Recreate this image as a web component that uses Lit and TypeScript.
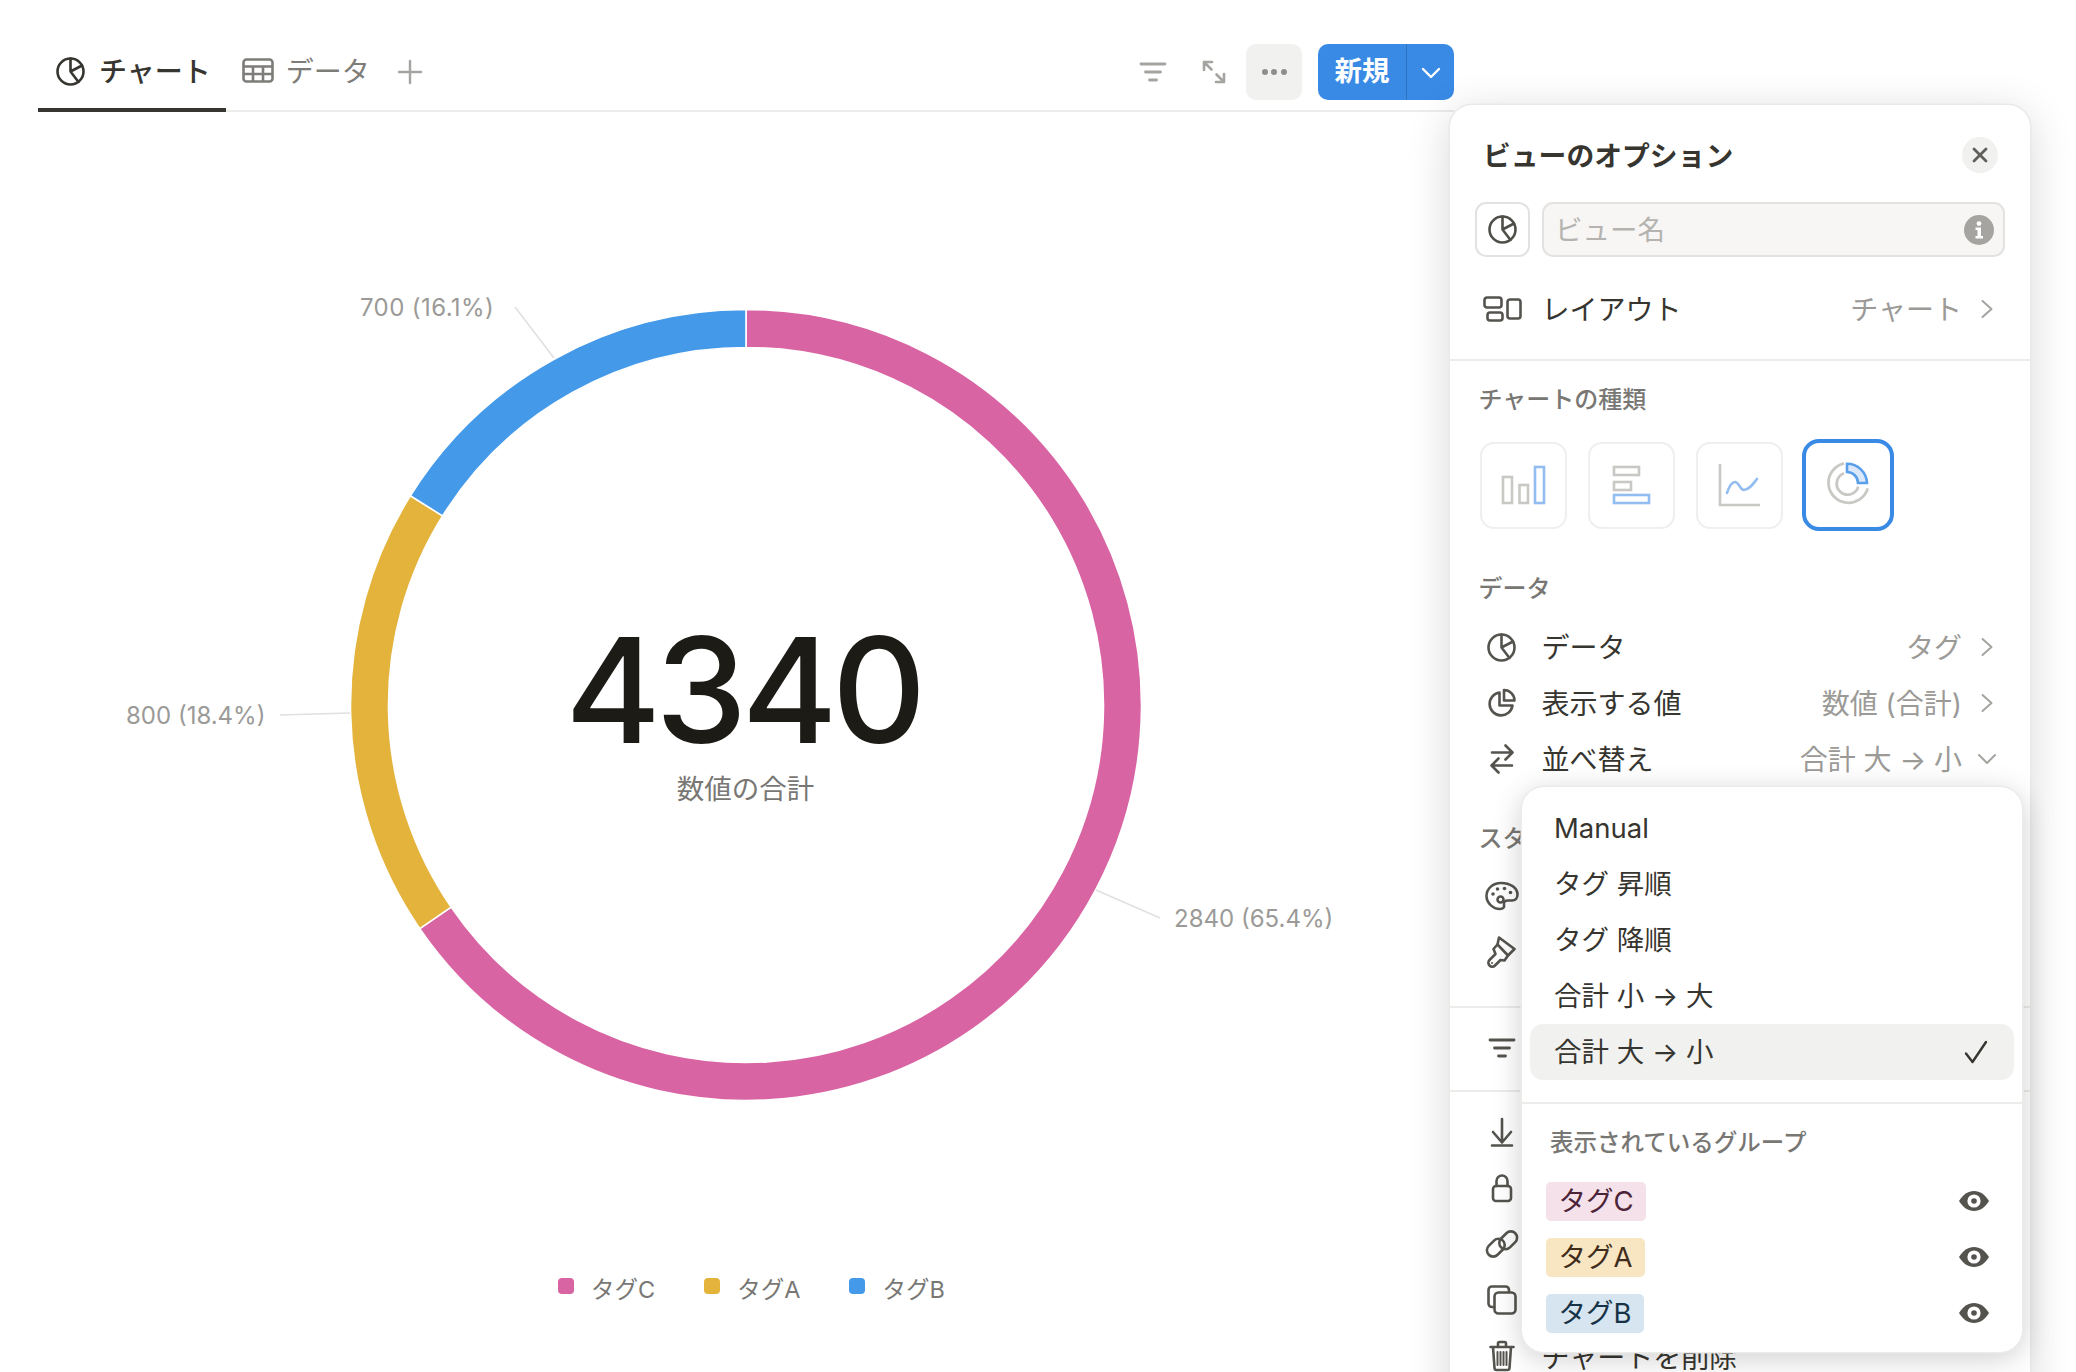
import { LitElement, html, css, svg } from "lit";
import { customElement } from "lit/decorators.js";

const ic = (w: number, h: number, body: unknown, cls = "") =>
  html`<svg class="ic ${cls}" width=${w} height=${h} viewBox="0 0 ${w} ${h}" fill="none" stroke="currentColor" stroke-width="2.6" stroke-linecap="round" stroke-linejoin="round">${body}</svg>`;

const pie = (s = 29) => ic(s, s, svg`<g transform="scale(${s / 29})"><circle cx="14.5" cy="14.5" r="13"/><path d="M14.5 1.5V14.5L26 8.5M14.5 14.5L22.5 25"/></g>`);
const table = () => html`<svg class="ic" width="32" height="25" viewBox="0 0 32 25" fill="none" stroke="currentColor" stroke-width="2.6"><rect x="1.5" y="1.5" width="29" height="22" rx="3"/><path d="M1.5 8.5H30.5M1.5 16H30.5M11 8.5V23.5M21 8.5V23.5"/></svg>`;
const plus = () => ic(26, 26, svg`<path stroke-width="2.4" d="M13 2V24M2 13H24"/>`);
const filter = () => ic(28, 22, svg`<path stroke-width="2.8" d="M2 3H26M6.5 11H21.5M10.5 19H17.5"/>`);
const expand = () => ic(26, 26, svg`<path d="M3 3L10.5 10.5M3 11V3H11M15.5 15.5L23 23M23 15V23H15"/>`);
const chevR = () => ic(14, 20, svg`<path stroke-width="2" d="M2.5 2L11.5 10L2.5 18"/>`, "chev");
const chevD = () => ic(20, 12, svg`<path stroke-width="2" d="M2 2L10 10L18 2"/>`, "chev");
const layoutIc = () => ic(40, 28, svg`<rect x="2.5" y="2.5" width="17" height="10" rx="2.5"/><rect x="5.5" y="17.5" width="15" height="8" rx="2.5"/><rect x="25.5" y="4.5" width="13" height="19" rx="2.5"/>`);
const pie2 = () => ic(30, 30, svg`<path d="M12.5 4.5A11.5 11.5 0 1 0 25.5 17.5H12.5Z"/><path d="M17 2A10.5 10.5 0 0 1 27.5 12.5H17Z"/>`);
const swap = () => ic(24, 32, svg`<path d="M2 9.5H22M15.5 2.5L22.5 9.5L15.5 16.5M22 22.5H2M8.5 15.5L1.5 22.5L8.5 29.5"/>`);
const palette = () => ic(34, 30, svg`<path d="M16 2C7.5 2 1.5 8 1.5 15S8 28 15 28C18.5 28 19.5 26 19 23.5C18.5 21 20 19.5 23 19.5H27C30.5 19.5 32.5 17 32.5 13.5C32.5 6.5 25 2 16 2Z"/><circle cx="8" cy="13" r="1.8" fill="currentColor" stroke="none"/><circle cx="12.5" cy="8" r="1.8" fill="currentColor" stroke="none"/><circle cx="19.5" cy="7.5" r="1.8" fill="currentColor" stroke="none"/><circle cx="25.5" cy="11.5" r="1.8" fill="currentColor" stroke="none"/><circle cx="15.5" cy="18.5" r="3"/>`);
const brush = () => ic(30, 33, svg`<path d="M12 1.5L27.5 13L21 19.5L10.5 8.5Z"/><path d="M10.5 8.5L6.5 13L8.5 18L2.5 24C1 25.5 1 28 2.5 29.5S6.5 31 8 29.5L13.5 24L17.5 24.5L21 19.5"/><circle cx="5" cy="27" r="1" fill="currentColor" stroke="none"/>`);
const download = () => ic(24, 30, svg`<path d="M12 2V25.5M3 15L12 25.5L21 15M2 28.5H22"/>`);
const lock = () => ic(22, 30, svg`<rect x="2" y="13" width="18" height="15" rx="3"/><path d="M5.5 13V8A5.5 5.5 0 0 1 16.5 8V13"/>`);
const link = () => ic(30, 30, svg`<g transform="rotate(-45 15 15)"><rect x="-2" y="7" width="20" height="12.5" rx="6.25"/><rect x="12" y="10.5" width="20" height="12.5" rx="6.25"/></g>`, "over");
const copy = () => ic(30, 30, svg`<rect x="7.5" y="7.5" width="21" height="21" rx="4"/><path d="M7 22H5C3 22 1.5 20.5 1.5 18.5V5C1.5 3 3 1.5 5 1.5H18.5C20.5 1.5 22 3 22 5V7"/>`);
const trash = () => ic(26, 32, svg`<path d="M1.5 7H24.5M9 7V3.5C9 2.5 9.5 2 10.5 2H15.5C16.5 2 17 2.5 17 3.5V7M4 7L5.5 28C5.6 29.5 6.5 30 7.5 30H18.5C19.5 30 20.4 29.5 20.5 28L22 7"/><path stroke-width="2" d="M8.5 12V25M11.5 12V25M14.5 12V25M17.5 12V25"/>`);
const check = () => ic(24, 24, svg`<path stroke-width="2.4" d="M2 13.5L8.5 22L22 2"/>`);
const eye = () => html`<svg class="eye" width="30" height="20" viewBox="0 0 30 20"><path d="M0 10C4 3.5 9 0 15 0S26 3.5 30 10C26 16.5 21 20 15 20S4 16.5 0 10Z" fill="#55534e"/><circle cx="15" cy="10" r="6.6" fill="#fff"/><circle cx="15" cy="10" r="2.8" fill="#55534e"/></svg>`;
const close = () => ic(16, 16, svg`<path stroke-width="2.8" d="M2 2L14 14M14 2L2 14"/>`);
const info = () => html`<svg class="info" width="30" height="30" viewBox="0 0 30 30"><circle cx="15" cy="15" r="15" fill="#a5a4a0"/><circle cx="15" cy="8.6" r="2.4" fill="#fff"/><path d="M11.5 12.5H17V21H19V23.5H11.5V21H13.5V15H11.5Z" fill="#fff"/></svg>`;

const GRAY = "#c9c8c5";
const BLUE = "#93bdf0";
const barChart = () => html`<svg width="46" height="40" viewBox="0 0 46 40" fill="none" stroke-width="2.6"><rect x="2" y="12" width="9" height="26" stroke=${GRAY}/><rect x="18.5" y="20" width="8.5" height="18" stroke=${GRAY}/><rect x="34" y="2" width="9" height="36" stroke=${BLUE}/></svg>`;
const hbarChart = () => html`<svg width="40" height="40" viewBox="0 0 40 40" fill="none" stroke-width="2.6"><rect x="2" y="2" width="25" height="8" stroke=${GRAY}/><rect x="2" y="17" width="17" height="8" stroke=${GRAY}/><rect x="2" y="30" width="35" height="8" stroke=${BLUE}/></svg>`;
const lineChart = () => html`<svg width="44" height="44" viewBox="0 0 44 44" fill="none" stroke-width="2.6"><path d="M2 1V42H42" stroke=${GRAY}/><path d="M9 30C11 24 14 19 17 19C21 19 22 27 26 27C31 27 35 21 39 16" stroke=${BLUE} stroke-linecap="round"/></svg>`;
const donutChart = () => html`<svg width="48" height="48" viewBox="0 0 48 48" fill="none" stroke-width="2.8"><path d="M20 2.3A20 20 0 1 0 43.7 27.3" stroke=${GRAY}/><path d="M20 12.3A11 11 0 1 0 34.3 25.7" stroke=${GRAY}/><path d="M23 2.8A20 20 0 0 1 43 22H34A11 11 0 0 0 23 11Z" fill="#dbe8f9" stroke="#5a9fea" stroke-width="2.6"/></svg>`;

const CX = 746, CY = 705, R = 395.5, RI = 357.5;
const DATA = [
  { name: "タグC", v: 2840, color: "#d964a3" },
  { name: "タグA", v: 800, color: "#e3b33c" },
  { name: "タグB", v: 700, color: "#4499e9" },
];
const pt = (r: number, a: number) => `${(CX + r * Math.sin(a)).toFixed(2)} ${(CY - r * Math.cos(a)).toFixed(2)}`;
function sector(a0: number, a1: number) {
  const large = a1 - a0 > Math.PI ? 1 : 0;
  return `M${pt(R, a0)}A${R} ${R} 0 ${large} 1 ${pt(R, a1)}L${pt(RI, a1)}A${RI} ${RI} 0 ${large} 0 ${pt(RI, a0)}Z`;
}
const total = DATA.reduce((s, d) => s + d.v, 0);

@customElement("app-root")
export class AppRoot extends LitElement {
  static styles = css`
    :host {
      display: block; position: relative; width: 2076px; height: 1372px; overflow: hidden;
      background: #fff; color: #37352f;
      font-family: Inter, "Noto Sans CJK JP", sans-serif;
    }
    * { box-sizing: border-box; }
    svg { display: block; flex: none; }
    svg.over { overflow: visible; }
    .header {
      margin-left: 38px; width: 1416px; height: 112px; padding-top: 44px;
      display: flex; align-items: flex-start; border-bottom: 2px solid #ececeb;
    }
    .tab {
      height: 68px; display: flex; align-items: flex-start; gap: 12px; font-size: 28px; line-height: 57px;
      color: #7d7c78; padding: 0 14px 0 16px;
    }
    .tab svg { margin-top: 14px; }
    .tab.active {
      color: #37352f; padding: 0 15px 0 18px; gap: 14px; font-weight: 500;
      border-bottom: 4px solid #37352f;
    }
    .tab.active svg { margin-top: 13px; }
    .addtab { color: #a5a4a0; margin: 15px 0 0 13px; }
    .spacer { flex: 1; }
    .tool { color: #a5a4a0; height: 56px; display: flex; align-items: center; }
    .tool.f { margin-right: 34px; }
    .tool.e { margin-right: 19px; }
    .more {
      width: 56px; height: 56px; border-radius: 10px; background: #f1f1ef;
      display: flex; align-items: center; justify-content: center; gap: 3.5px; margin-right: 16px;
    }
    .more i { width: 6px; height: 6px; border-radius: 50%; background: #8f8e8a; }
    .newbtn {
      width: 136px; height: 56px; background: #388ae5; color: #fff; border-radius: 10px;
      display: flex; align-items: stretch; font-size: 27.5px; font-weight: 700; line-height: 54px;
    }
    .newbtn .lab { width: 89px; text-align: center; border-right: 1px solid #2f72bf; }
    .newbtn .drop { flex: 1; display: flex; align-items: center; justify-content: center; padding-top: 2px; }
    .chart { display: block; }
    .chart .lbl { font-size: 24px; fill: #9b9a97; font-family: Inter, sans-serif; }
    .chart .lbl.wide { letter-spacing: 0.4px; }
    .chart .num { font-size: 146px; font-weight: 500; letter-spacing: -5.5px; fill: #1d1b16; font-family: Inter, sans-serif; text-anchor: middle; }
    .chart .sub { font-size: 27.5px; fill: #787774; font-family: "Noto Sans CJK JP", sans-serif; text-anchor: middle; }
    .legend { margin-left: 558px; display: flex; gap: 49px; font-size: 23.5px; line-height: 32px; color: #787774; }
    .legend .it { display: flex; gap: 17px; }
    .legend .sq { width: 16px; height: 16px; border-radius: 4px; margin-top: 4px; }

    .panel {
      position: absolute; left: 1450px; top: 105px; width: 580px; height: 1320px; background: #fff;
      border-radius: 22px; font-size: 28px; padding-top: 22px;
      box-shadow: 0 0 0 1.5px #e9e9e7, 0 8px 44px rgba(0, 0, 0, 0.16);
    }
    .title {
      height: 56px; display: flex; align-items: center; justify-content: space-between;
      padding: 0 32px 0 33px; font-weight: 700; font-size: 27.8px;
    }
    .title .tt { margin-top: -3px; }
    .x {
      width: 36px; height: 36px; border-radius: 50%; background: #f1f1ef; color: #5f5e5a;
      display: flex; align-items: center; justify-content: center;
    }
    .name { margin: 19px 25px 0 24.5px; display: flex; gap: 12.5px; height: 55px; }
    .iconbtn {
      width: 55px; border: 2px solid #e3e2e0; border-radius: 11px; display: flex; align-items: center; justify-content: center;
      color: #4f4e49;
    }
    .input {
      flex: 1; border: 2px solid #e3e2e0; border-radius: 11px; background: #f7f6f4;
      display: flex; align-items: center; justify-content: space-between; padding: 0 9px 0 11px; color: #b4b3b0; font-size: 27.5px;
    }
    .input span { margin-top: -3px; }
    .row {
      height: 56px; display: flex; align-items: center; padding: 0 33px 0 31px; color: #37352f;
    }
    .row .i { width: 41px; margin-right: 19.5px; display: flex; justify-content: center; color: #55534e; flex: none; }
    .row .t { flex: 1; white-space: nowrap; margin-top: -3px; }
    .row .t.low { margin-top: 0; }
    .row .v { color: #9b9a97; margin-right: 15px; white-space: nowrap; margin-top: -3px; }
    .row .c { width: 20px; display: flex; justify-content: center; color: #a5a4a0; }
    .layoutrow { margin-top: 24px; }
    .hr { height: 2px; background: #ececeb; }
    .sec { height: 32px; padding-left: 28.5px; font-size: 24px; font-weight: 500; color: #787774; line-height: 34px; white-space: nowrap; }
    .types { display: flex; gap: 21px; padding-left: 30px; margin-top: 26.5px; height: 86.5px; }
    .type {
      width: 87px; height: 87px; border: 2px solid #efefed; border-radius: 14px;
      display: flex; align-items: center; justify-content: center;
    }
    .type.sel { border: 4px solid #388ae5; width: 92px; height: 92px; margin: -2.5px 0 0 -2.5px; border-radius: 17px; }
    .mt22 { margin-top: 22px; } .mt44 { margin-top: 44px; } .mt15 { margin-top: 15px; } .mt35 { margin-top: 35px; }
    .mt14 { margin-top: 14px; } .mt26 { margin-top: 26px; } .mt12 { margin-top: 12px; }

    .menu {
      position: absolute; left: 72px; top: 682px; width: 500px; height: 565px; background: #fff;
      border-radius: 22px; padding-top: 13px;
      box-shadow: 0 0 0 1.5px #ebebe9, 0 6px 30px rgba(0, 0, 0, 0.2);
    }
    .opt {
      height: 56px; margin: 0 8px; padding: 0 26px 5px 24px; border-radius: 13px; display: flex; align-items: center;
      justify-content: space-between; font-size: 27.5px; white-space: nowrap;
    }
    .opt.latin { padding-bottom: 0; }
    .opt.on { background: #f1f1ef; }
    .opt svg { margin-top: 5px; }
    .menu .hr { margin-top: 22px; }
    .glabel { height: 32px; margin-top: 23px; padding-left: 28px; font-size: 23.5px; font-weight: 500; color: #787774; line-height: 32px; }
    .group { height: 56px; display: flex; align-items: center; justify-content: space-between; padding: 0 33px 0 24px; }
    .groups { margin-top: 14px; }
    .tag { height: 39px; line-height: 38px; padding: 0 12.5px; border-radius: 5px; font-size: 27.5px; font-weight: 400; white-space: nowrap; }
    .tag.c { background: #f4e1ea; color: #4c2337; }
    .tag.a { background: #f8e6c3; color: #402c1b; }
    .tag.b { background: #d6e5ef; color: #183347; }
  `;

  render() {
    let acc = 0;
    const segs = DATA.map((d) => {
      const a0 = (acc / total) * Math.PI * 2;
      acc += d.v;
      const a1 = (acc / total) * Math.PI * 2;
      return svg`<path d=${sector(a0, a1)} fill=${d.color} stroke="#fff" stroke-width="1.6"/>`;
    });
    return html`
      <div class="header">
        <div class="tab active">${pie()}<span>チャート</span></div>
        <div class="tab">${table()}<span>データ</span></div>
        <div class="addtab">${plus()}</div>
        <div class="spacer"></div>
        <div class="tool f">${filter()}</div>
        <div class="tool e">${expand()}</div>
        <div class="more"><i></i><i></i><i></i></div>
        <div class="newbtn"><span class="lab">新規</span><span class="drop">${ic(20, 12, svg`<path stroke-width="2.4" d="M2 2L10 10L18 2"/>`)}</span></div>
      </div>
      <svg class="chart" width="1454" height="1162" viewBox="0 112 1454 1162">
        ${segs}
        <path d="M515 307L554 358M280 715L350 713M1096 890L1160 918" stroke="#e1e0de" stroke-width="1.6" fill="none"/>
        <text class="lbl wide" x="360" y="315.5">700 (16.1%)</text>
        <text class="lbl" x="126" y="723.5">800 (18.4%)</text>
        <text class="lbl" x="1174" y="926.5">2840 (65.4%)</text>
        <text class="num" x="743" y="743">4340</text>
        <text class="sub" x="745.5" y="799">数値の合計</text>
      </svg>
      <div class="legend">
        ${DATA.map((d) => html`<div class="it"><span class="sq" style="background:${d.color}"></span><span>${d.name}</span></div>`)}
      </div>

      <div class="panel">
        <div class="title"><span class="tt">ビューのオプション</span><span class="x">${close()}</span></div>
        <div class="name">
          <div class="iconbtn">${pie()}</div>
          <div class="input"><span>ビュー名</span>${info()}</div>
        </div>
        <div class="row layoutrow"><span class="i">${layoutIc()}</span><span class="t">レイアウト</span><span class="v">チャート</span><span class="c">${chevR()}</span></div>
        <div class="hr mt22"></div>
        <div class="sec mt22">チャートの種類</div>
        <div class="types">
          <div class="type">${barChart()}</div>
          <div class="type">${hbarChart()}</div>
          <div class="type">${lineChart()}</div>
          <div class="type sel">${donutChart()}</div>
        </div>
        <div class="sec mt44">データ</div>
        <div class="row mt15"><span class="i">${pie()}</span><span class="t">データ</span><span class="v">タグ</span><span class="c">${chevR()}</span></div>
        <div class="row"><span class="i">${pie2()}</span><span class="t">表示する値</span><span class="v">数値 (合計)</span><span class="c">${chevR()}</span></div>
        <div class="row"><span class="i">${swap()}</span><span class="t">並べ替え</span><span class="v">合計 大 → 小</span><span class="c">${chevD()}</span></div>
        <div class="sec mt35">スタイル</div>
        <div class="row mt14"><span class="i">${palette()}</span></div>
        <div class="row"><span class="i">${brush()}</span></div>
        <div class="hr mt26"></div>
        <div class="row mt12"><span class="i">${filter()}</span></div>
        <div class="hr mt14"></div>
        <div class="row mt12"><span class="i">${download()}</span></div>
        <div class="row"><span class="i">${lock()}</span></div>
        <div class="row"><span class="i">${link()}</span></div>
        <div class="row"><span class="i">${copy()}</span></div>
        <div class="row"><span class="i">${trash()}</span><span class="t low">チャートを削除</span></div>

        <div class="menu">
          <div class="opt latin">Manual</div>
          <div class="opt">タグ 昇順</div>
          <div class="opt">タグ 降順</div>
          <div class="opt">合計 小 → 大</div>
          <div class="opt on"><span>合計 大 → 小</span>${check()}</div>
          <div class="hr"></div>
          <div class="glabel">表示されているグループ</div>
          <div class="groups">
            <div class="group"><span class="tag c">タグC</span>${eye()}</div>
            <div class="group"><span class="tag a">タグA</span>${eye()}</div>
            <div class="group"><span class="tag b">タグB</span>${eye()}</div>
          </div>
        </div>
      </div>
    `;
  }
}
